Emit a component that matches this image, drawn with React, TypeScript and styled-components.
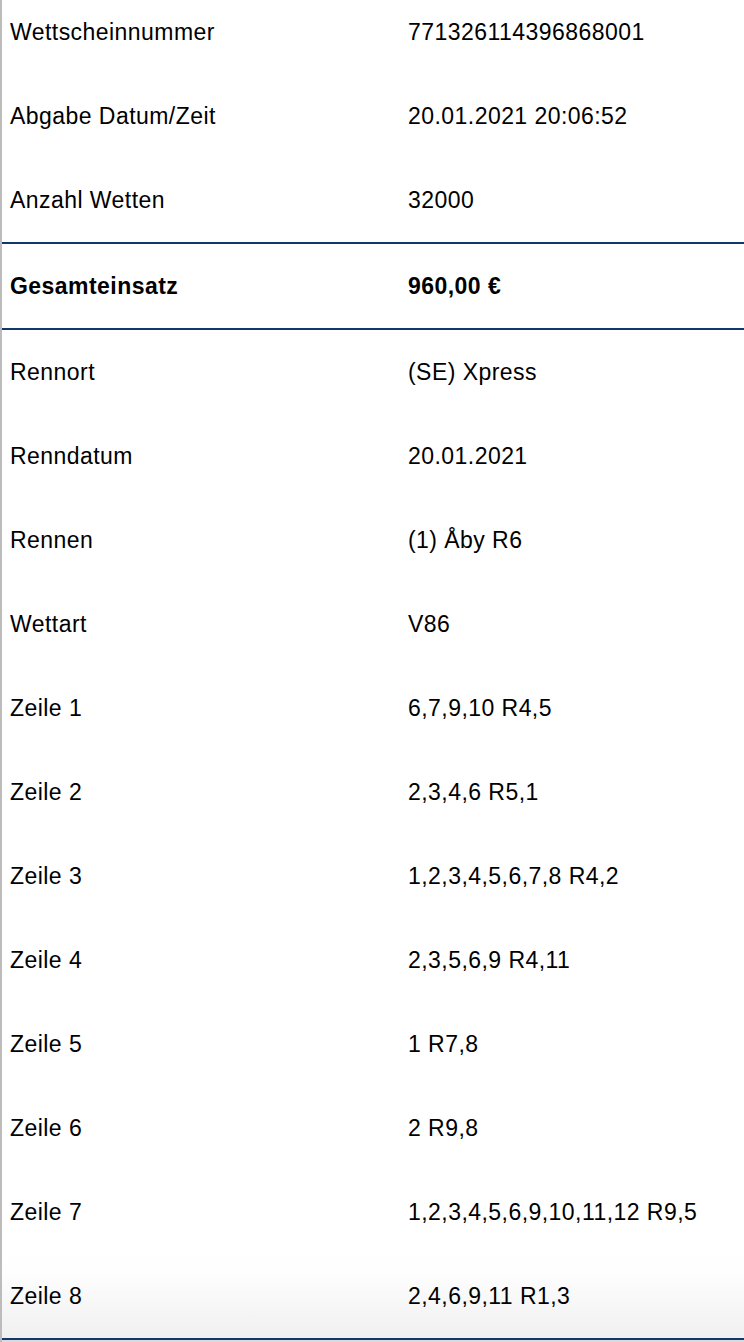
import styled, { createGlobalStyle } from 'styled-components';

const GlobalStyle = createGlobalStyle`
  html, body {
    margin: 0;
    padding: 0;
    background: #ffffff;
  }
  body {
    font-family: 'Liberation Sans', Arial, Helvetica, sans-serif;
    color: #000;
  }
`;

const Frame = styled.div`
  height: 1342px;
  overflow: hidden;
  border-left: 2px solid #bcbcbc;
  background: #dadada;
`;

const Table = styled.div`
  margin-top: -10px;
  display: flex;
  flex-direction: column;
  background: #fff;
`;

const Row = styled.div<{ $strong?: boolean; $divider?: boolean; $fade?: boolean }>`
  display: grid;
  grid-template-columns: 398px 1fr;
  align-items: center;
  height: 84px;
  font-size: 23px;
  letter-spacing: 0.45px;
  font-weight: ${(p) => (p.$strong ? 700 : 400)};
  border-bottom: ${(p) => (p.$divider ? '2px solid #0f386c' : 'none')};
  background: ${(p) =>
    p.$fade ? 'linear-gradient(to bottom, #ffffff 0%, #fdfdfd 25%, #f0f0f0 100%)' : '#fff'};
`;

const Cell = styled.div`
  padding: 0 8px;
  white-space: nowrap;
`;

interface Entry {
  label: string;
  value: string;
  strong?: boolean;
  divider?: boolean;
}

const entries: Entry[] = [
  { label: 'Wettscheinnummer', value: '771326114396868001' },
  { label: 'Abgabe Datum/Zeit', value: '20.01.2021 20:06:52' },
  { label: 'Anzahl Wetten', value: '32000', divider: true },
  { label: 'Gesamteinsatz', value: '960,00 €', strong: true, divider: true },
  { label: 'Rennort', value: '(SE) Xpress' },
  { label: 'Renndatum', value: '20.01.2021' },
  { label: 'Rennen', value: '(1) Åby R6' },
  { label: 'Wettart', value: 'V86' },
  { label: 'Zeile 1', value: '6,7,9,10 R4,5' },
  { label: 'Zeile 2', value: '2,3,4,6 R5,1' },
  { label: 'Zeile 3', value: '1,2,3,4,5,6,7,8 R4,2' },
  { label: 'Zeile 4', value: '2,3,5,6,9 R4,11' },
  { label: 'Zeile 5', value: '1 R7,8' },
  { label: 'Zeile 6', value: '2 R9,8' },
  { label: 'Zeile 7', value: '1,2,3,4,5,6,9,10,11,12 R9,5' },
  { label: 'Zeile 8', value: '2,4,6,9,11 R1,3', divider: true },
];

const App = () => {
  return (
    <>
      <GlobalStyle />
      <Frame>
        <Table>
          {entries.map((e, i) => (
            <Row key={e.label} $strong={e.strong} $divider={e.divider} $fade={i === entries.length - 1}>
              <Cell>{e.label}</Cell>
              <Cell>{e.value}</Cell>
            </Row>
          ))}
        </Table>
      </Frame>
    </>
  );
};

export default App;
